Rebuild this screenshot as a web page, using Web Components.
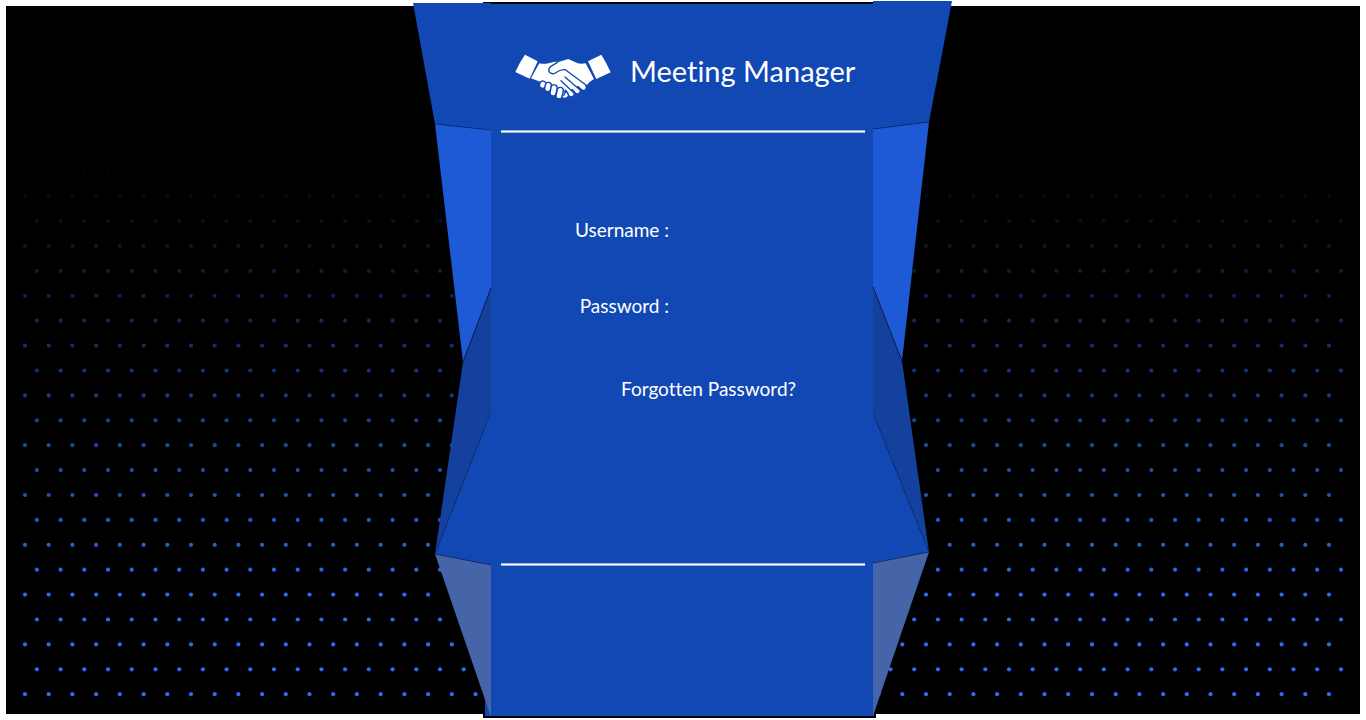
<!DOCTYPE html>
<html lang="en">
<head>
<meta charset="utf-8">
<title>Meeting Manager</title>
<style>
  body { margin: 0; background: #fff; font-family: Lato, Carlito, Calibri, sans-serif; font-variant-ligatures: none; color: #fff; }
</style>
</head>
<body>
<sign-in-page>
  <folded-panel>
    <brand-header slot="header">Meeting Manager</brand-header>
    <login-form></login-form>
  </folded-panel>
</sign-in-page>

<script>
const define = (name, html, setup) => customElements.define(name, class extends HTMLElement {
  constructor() {
    super();
    this.attachShadow({ mode: 'open' }).innerHTML = html;
    if (setup) setup(this.shadowRoot);
  }
});

/* Staggered dots that fade in from top to bottom */
define('dot-field', `
  <style>
    :host { display: block; background: #000; overflow: hidden; position: relative; }
    svg { position: absolute; inset: 0; width: 100%; height: 100%; }
  </style>
  <svg viewBox="0 0 1354 708" preserveAspectRatio="xMidYMid slice" fill="#2d6bf2" aria-hidden="true"></svg>
`, root => {
  let dots = '';
  for (let row = 0; row < 22; row++) {
    const y = (165.3 + row * 24.9).toFixed(1);
    const opacity = Math.min(1, 0.04 + row * 0.056).toFixed(2);
    for (let col = 0; col < 56; col++) {
      const x = ((row % 2 ? 19 : 30.9) + col * 23.71).toFixed(1);
      dots += `<circle cx="${x}" cy="${y}" r="2.1" opacity="${opacity}"/>`;
    }
  }
  root.querySelector('svg').innerHTML = dots;
});

define('sign-in-page', `
  <style>
    :host { display: grid; grid-template: minmax(100vh, auto) / minmax(0, 1fr); }
    dot-field, main { grid-area: 1 / 1; }
    dot-field { margin: 6px; }
    main { display: grid; justify-items: center; position: relative; }
  </style>
  <dot-field></dot-field>
  <main><slot></slot></main>
`);

define('folded-panel', `
  <style>
    :host { display: flex; flex-direction: column; position: relative; width: 100%; max-width: 540px; box-sizing: border-box; padding: 0 88px; }
    svg { position: absolute; inset: 0; width: 100%; height: 100%; }
    header, section, hr { position: relative; }
    header { height: 130px; display: grid; align-items: center; }
    section { height: 430px; }
    hr { box-sizing: border-box; width: 100%; height: 3px; margin: 0; background: #fff; border: solid #9db6e1; border-width: 1px 0; }
  </style>
  <svg viewBox="0 0 540 720" preserveAspectRatio="none" aria-hidden="true">
    <path fill="#000" d="M70 2H461V714H463V718H70Z"/>
    <path fill="#1248b4" d="M72 4H461V716H72Z"/>
    <g fill="#1248b4">
      <path d="M0 3H78V130L22 124Z"/>
      <path d="M460 1H539L516 122L460 129Z"/>
      <path d="M22 554L78 412V565Z"/>
      <path d="M516 552L460 413V563Z"/>
    </g>
    <g fill="#1e5ad5">
      <path d="M22 124L78 130V288L50 362Z"/>
      <path d="M516 122L460 129V287L489 361Z"/>
    </g>
    <g fill="#15419e">
      <path d="M78 288L50 362L22 554L78 412Z"/>
      <path d="M460 287L489 361L516 552L460 413Z"/>
    </g>
    <g fill="#4565a8">
      <path d="M22 554L78 565V717Z"/>
      <path d="M516 552L460 563V716Z"/>
    </g>
    <g fill="none" stroke="#0a2050" stroke-width="1">
      <path opacity=".6" d="M22 124L78 130M516 122L460 129M22 554L78 565M516 552L460 563"/>
      <path d="M78 288L50 362M460 287L489 361"/>
      <path opacity=".6" stroke-dasharray="2 1" d="M22 554L78 412M516 552L460 413"/>
    </g>
  </svg>
  <header><slot name="header"></slot></header>
  <hr>
  <section><slot></slot></section>
  <hr>
`);

define('brand-header', `
  <style>
    :host { display: flex; align-items: center; gap: 19px; padding: 22px 0 0 14px; }
    svg { flex: none; width: 96px; height: 44px; }
    h1 { margin: 0 0 10px; font-size: 29px; line-height: 36px; font-weight: 400; white-space: nowrap; }
  </style>
  <svg viewBox="30 28 288 132" fill="#fff" aria-hidden="true">
    <path d="M60 30L98 50L74 102L31 82Q43 54 60 30Z"/>
    <path d="M289 30L249 50L274 103L317 83Q305 55 289 30Z"/>
    <path d="M103 56Q116 59 130 56L150 51L160 52L190 43L218 56Q230 58 242 56L267 103Q251 112 246 121L215 124L190 140L165 135L108 112L78 101Z"/>
    <g stroke="#fff" stroke-width="14" stroke-linecap="round">
      <path d="M205 101L235 128M188 105L217 138M174 116L199 147"/>
    </g>
    <g stroke="#1248b4" stroke-width="4" stroke-linecap="round">
      <path stroke="none" d="M172 158L176 142L184 143L189 152Q187 159 180 159Z"/>
      <rect x="104" y="109" width="18" height="22" rx="9" transform="rotate(15 113 120)"/>
      <rect x="120" y="113" width="18" height="28" rx="9" transform="rotate(12 129 127)"/>
      <rect x="137" y="120" width="18" height="34" rx="9" transform="rotate(12 146 136)"/>
      <rect x="155" y="128" width="18" height="35" rx="9" transform="rotate(12 164 145)"/>
      <path fill="none" d="M176 152L181 143M181 136L190 148"/>
    </g>
    <g fill="none" stroke="#1248b4" stroke-width="4" stroke-linecap="round" stroke-linejoin="round">
      <path d="M157 53L138 65Q129 72 132 81Q139 91 151 85Q166 73 181 75L244 122"/>
      <path d="M180 97L225 136M168 108L207 145"/>
    </g>
  </svg>
  <h1><slot></slot></h1>
`);

define('login-form', `
  <style>
    :host { display: block; font-size: 19px; line-height: 24px; }
    form { display: grid; grid-template-columns: 168px minmax(0, 1fr); grid-auto-rows: 44px; row-gap: 32px; align-items: center; padding-top: 75px; }
    label { text-align: right; white-space: nowrap; }
    input { min-width: 0; height: 32px; margin-left: 12px; padding: 0 4px; border: 0; outline: 0; background: transparent; color: inherit; font: inherit; }
    a { grid-column: 1 / -1; margin: 14px 0 0 120px; color: inherit; text-decoration: none; }
  </style>
  <form>
    <label for="username">Username :</label>
    <input id="username" type="text" autocomplete="username">
    <label for="password">Password :</label>
    <input id="password" type="password" autocomplete="current-password">
    <a href="#forgotten">Forgotten Password?</a>
  </form>
`);
</script>
</body>
</html>
